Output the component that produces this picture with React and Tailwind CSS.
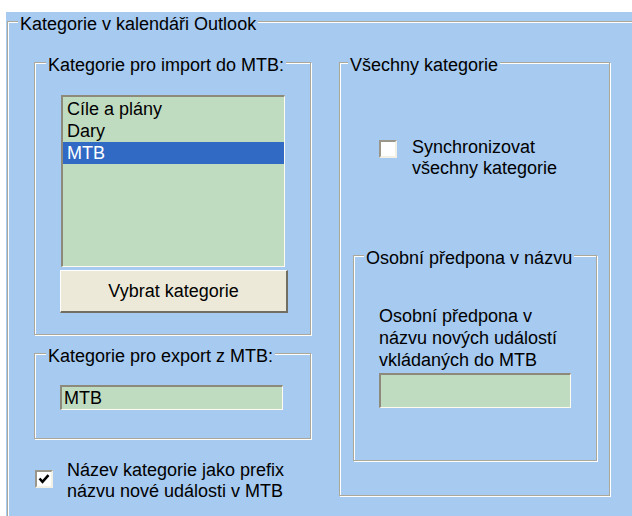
import React from "react";

function Group({ label, labelLeft, className = "", children }) {
  return (
    <div
      className={`relative border border-[#aca899] shadow-[inset_1px_1px_0_#ffffff,1px_1px_0_#ffffff] ${className}`}
    >
      <span
        className={`absolute top-[-8px] ${labelLeft} bg-[#a6caf0] px-[2px] leading-[21px] whitespace-nowrap`}
      >
        {label}
      </span>
      {children}
    </div>
  );
}

function CheckBox({ checked }) {
  return (
    <div className="w-[18px] h-[18px] shrink-0 bg-white border-t-2 border-l-2 border-t-[#9a978a] border-l-[#9a978a] border-r-2 border-b-2 border-r-[#f3f1e6] border-b-[#f3f1e6] flex items-center justify-center">
      {checked && (
        <svg width="14" height="14" viewBox="0 0 14 14">
          <polyline
            points="2.5,6.5 5.5,9.8 11.5,3.2"
            fill="none"
            stroke="#000"
            strokeWidth="2.6"
          />
        </svg>
      )}
    </div>
  );
}

export default function App() {
  return (
    <div className="w-[632px] h-[516px] bg-white pt-[12px] pl-[6px] overflow-hidden text-[18px] text-black [font-family:'Liberation_Sans',Arial,sans-serif]">
      <div className="h-[504px] bg-[#a6caf0] pt-[9px] pl-[1px] overflow-hidden">
        <Group
          label="Kategorie v kalendáři Outlook"
          labelLeft="left-[10px]"
          className="w-[660px] h-[540px]"
        >
          <div className="flex pl-[26px] pt-[40px] gap-[28px]">
            {/* left column */}
            <div className="flex flex-col w-[277px]">
              <Group
                label="Kategorie pro import do MTB:"
                labelLeft="left-[11px]"
                className="h-[273px]"
              >
                <div className="flex flex-col pl-[25px] pt-[32px]">
                  <div className="ml-[1px] w-[224px] h-[172px] bg-[#c0dcc0] border-t-2 border-l-2 border-t-[#8d8a7c] border-l-[#8d8a7c] border-r border-b border-r-[#fffbf0] border-b-[#fffbf0] pt-[1px]">
                    <div className="h-[22px] leading-[22px] pl-[4px]">Cíle a plány</div>
                    <div className="h-[22px] leading-[22px] pl-[4px]">Dary</div>
                    <div className="h-[22px] leading-[22px] pl-[4px] bg-[#316ac5] text-white">MTB</div>
                  </div>
                  <div className="mt-[3px] w-[228px] h-[43px] bg-[#ece9d8] border-t border-l border-t-white border-l-white border-r-2 border-b-2 border-r-[#716f64] border-b-[#716f64] flex items-center justify-center leading-[21px]">
                    Vybrat kategorie
                  </div>
                </div>
              </Group>

              <Group
                label="Kategorie pro export z MTB:"
                labelLeft="left-[11px]"
                className="mt-[18px] h-[86px]"
              >
                <div className="pl-[25px] pt-[31px]">
                  <div className="w-[223px] h-[25px] bg-[#c0dcc0] border-t-2 border-l-2 border-t-[#8d8a7c] border-l-[#8d8a7c] border-r border-b border-r-[#fffbf0] border-b-[#fffbf0] pl-[2px] pt-[1px] leading-[21px]">
                    MTB
                  </div>
                </div>
              </Group>

              <div className="mt-[21px] flex items-start">
                <div className="ml-[1px] mt-[10px]">
                  <CheckBox checked />
                </div>
                <div className="ml-[14px] leading-[21px]">
                  <div>Název kategorie jako prefix</div>
                  <div>názvu nové události v MTB</div>
                </div>
              </div>
            </div>

            {/* right column */}
            <Group
              label="Všechny kategorie"
              labelLeft="left-[8px]"
              className="w-[271px] h-[434px]"
            >
              <div className="flex flex-col pt-[74px]">
                <div className="flex items-start pl-[39px]">
                  <div className="mt-[3px]">
                    <CheckBox />
                  </div>
                  <div className="ml-[15px] leading-[21px]">
                    <div>Synchronizovat</div>
                    <div>všechny kategorie</div>
                  </div>
                </div>
                <Group
                  label="Osobní předpona v názvu"
                  labelLeft="left-[10px]"
                  className="ml-[13px] mt-[76px] w-[244px] h-[206px]"
                >
                  <div className="flex flex-col pl-[25px] pt-[49px]">
                    <div className="leading-[22px]">
                      <div>Osobní předpona v</div>
                      <div>názvu nových událostí</div>
                      <div>vkládaných do MTB</div>
                    </div>
                    <div className="mt-[2px] w-[192px] h-[35px] bg-[#c0dcc0] border-t-2 border-l-2 border-t-[#8d8a7c] border-l-[#8d8a7c] border-r border-b border-r-[#fffbf0] border-b-[#fffbf0]" />
                  </div>
                </Group>
              </div>
            </Group>
          </div>
        </Group>
      </div>
    </div>
  );
}
